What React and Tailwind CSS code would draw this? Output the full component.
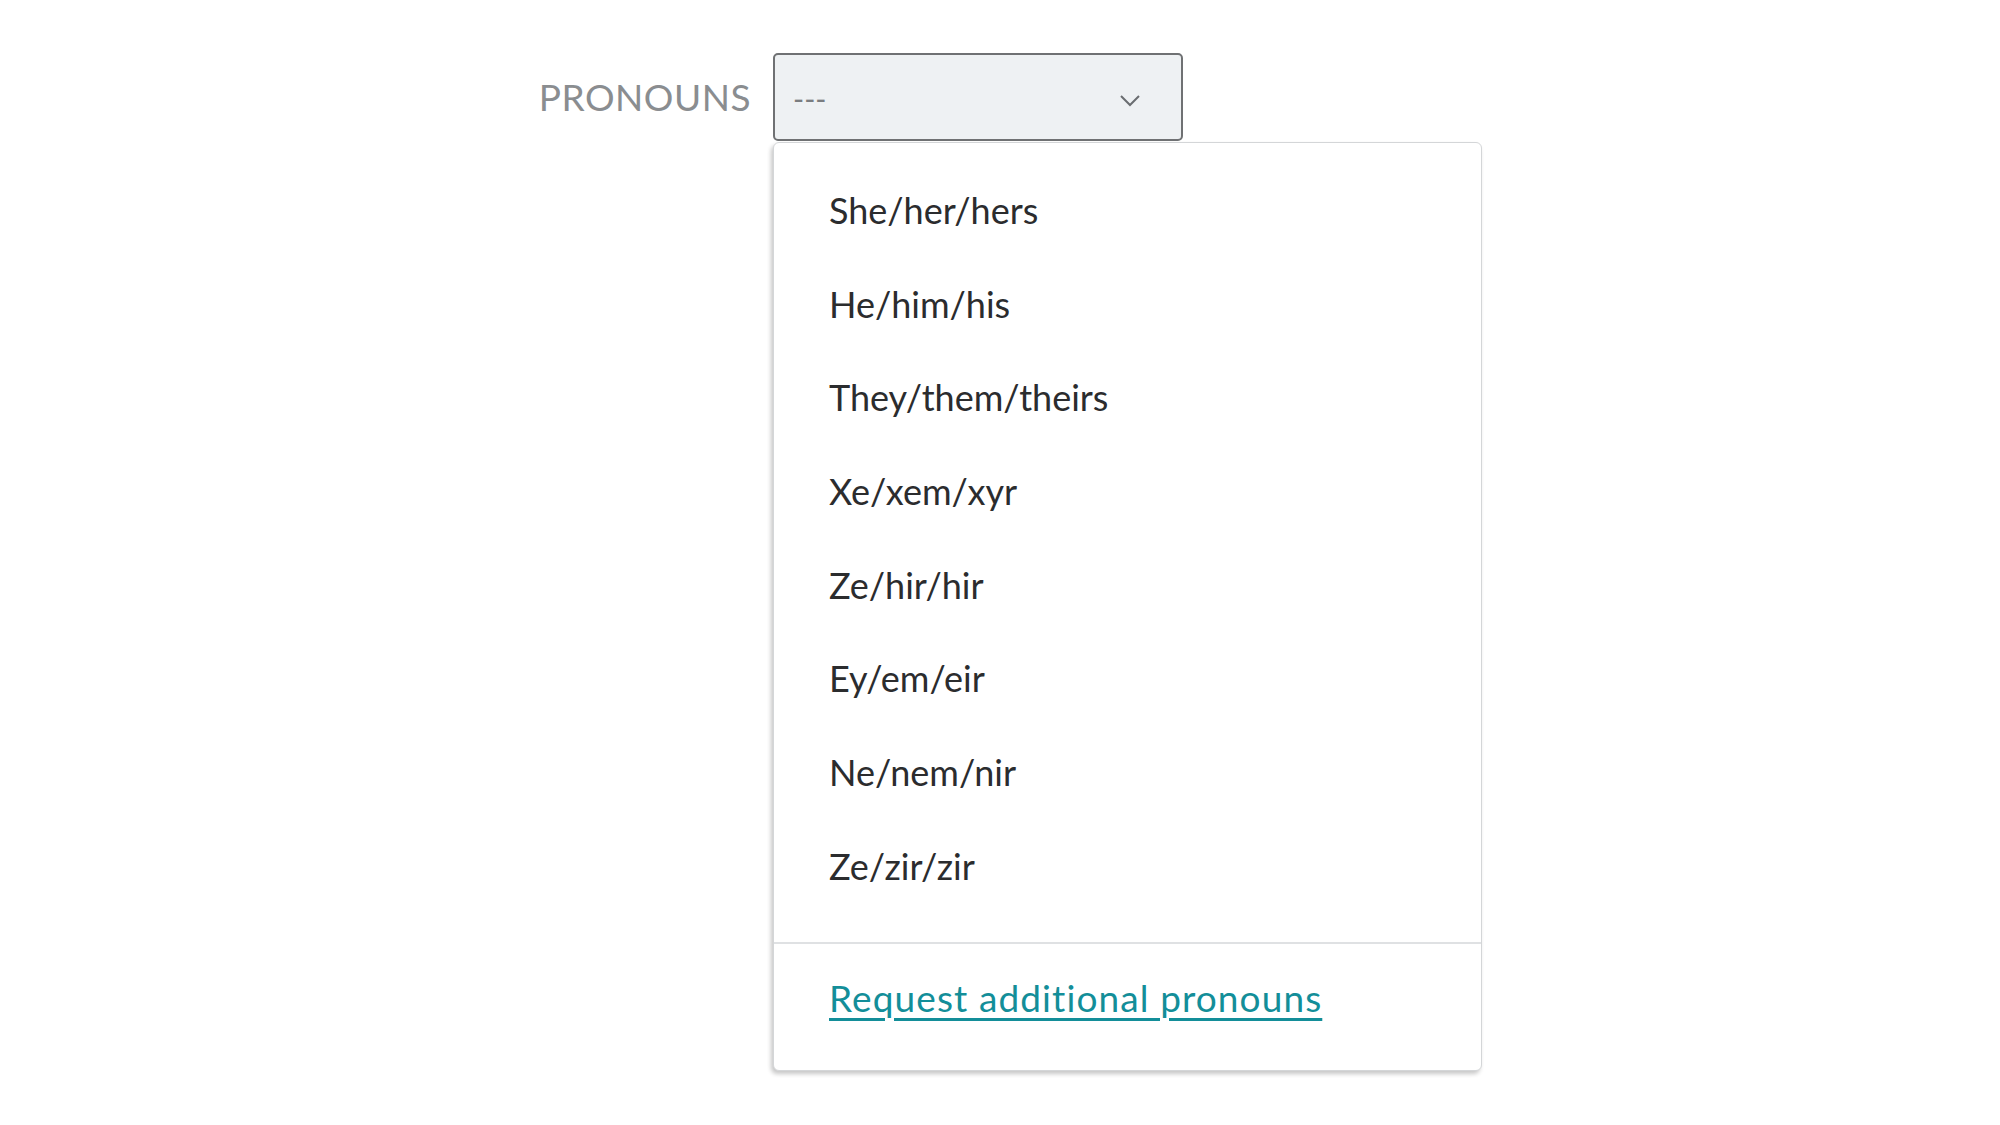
const pronouns = [
  'She/her/hers',
  'He/him/his',
  'They/them/theirs',
  'Xe/xem/xyr',
  'Ze/hir/hir',
  'Ey/em/eir',
  'Ne/nem/nir',
  'Ze/zir/zir',
]

export default function App() {
  return (
    <div className="min-h-[1125px] w-[2000px] bg-white font-['Lato',_sans-serif]">
      <div className="flex items-center gap-[22px] pt-[53px]">
        {/* Label */}
        <div className="w-[751px] text-right text-[37px] tracking-[0.5px] text-[#8a8d90]">
          PRONOUNS
        </div>

        {/* Select + open menu */}
        <div className="relative">
          <button className="flex h-[88px] w-[410px] items-center justify-between rounded-[5px] border-2 border-[#6f7173] bg-[#eef1f3] pl-[18px] pr-[40px]">
            <span className="mt-[2px] text-[30px] text-[#7a7d80]">---</span>
            <svg className="mt-[6px]" width="22" height="14" viewBox="0 0 22 14" fill="none">
              <path d="M2 3l9 9 9-9" stroke="#6a6d70" strokeWidth="2" />
            </svg>
          </button>

          <div className="absolute left-0 top-full z-10 mt-[1px] w-[709px] rounded-[6px] border border-[#d4d6d8] bg-white shadow-[-2px_3px_4px_rgba(0,0,0,0.22)]">
            <ul className="pt-[20px] pb-[29px]">
              {pronouns.map(p => (
                <li key={p} className="flex h-[93.7px] items-center pl-[55px] text-[36px] text-[#2b2c2e]">
                  {p}
                </li>
              ))}
            </ul>
            <div className="border-t-2 border-[#dfe1e3] pl-[55px] pt-[32px] pb-[50px]">
              <a href="#" className="text-[37px] leading-[44px] tracking-[1.1px] text-[#138e99] underline decoration-[3px] underline-offset-[6px]">
                Request additional pronouns
              </a>
            </div>
          </div>
        </div>
      </div>
    </div>
  )
}
